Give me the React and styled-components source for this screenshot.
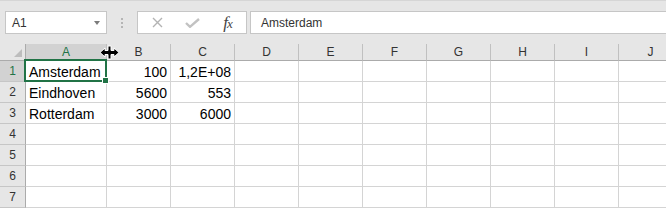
import { Fragment } from "react";
import styled, { createGlobalStyle } from "styled-components";

const GlobalStyle = createGlobalStyle`
  html, body {
    margin: 0;
    padding: 0;
    background: #ffffff;
    overflow: hidden;
  }
`;

const StyledWindow = styled.div`
  position: relative;
  width: 666px;
  height: 208px;
  overflow: hidden;
  background: #ffffff;
  font-family: "Liberation Sans", Arial, sans-serif;
`;

const StyledToolbar = styled.div`
  display: flex;
  align-items: flex-start;
  box-sizing: border-box;
  height: 44px;
  padding: 10px 0 0 5px;
  background: #e6e6e6;
  border-top: 1px solid #d6d6d6;
`;

const StyledNameBox = styled.div`
  display: flex;
  align-items: center;
  justify-content: space-between;
  box-sizing: border-box;
  width: 102px;
  height: 23px;
  padding: 0 6px 0 6px;
  background: #ffffff;
  border: 1px solid #c6c6c6;
  font-size: 12px;
  color: #333333;
`;

const StyledCaret = styled.span`
  width: 0;
  height: 0;
  margin-top: 1px;
  border-style: solid;
  border-width: 4px 3.5px 0 3.5px;
  border-color: #7b7b7b transparent transparent transparent;
`;

const StyledGrip = styled.div`
  display: flex;
  flex-direction: column;
  align-items: center;
  justify-content: center;
  gap: 2px;
  width: 30px;
  height: 23px;
`;

const StyledGripDot = styled.span`
  width: 2px;
  height: 2px;
  background: #b5b5b5;
`;

const StyledFxBox = styled.div`
  display: flex;
  align-items: center;
  box-sizing: border-box;
  width: 110px;
  height: 23px;
  padding-left: 2px;
  background: #ffffff;
  border: 1px solid #c6c6c6;
`;

const StyledFxButton = styled.div`
  display: flex;
  align-items: center;
  justify-content: center;
  width: 35px;
  height: 21px;
`;

const StyledFxLabel = styled.span`
  font-family: "Liberation Serif", "Times New Roman", serif;
  font-style: italic;
  font-size: 17px;
  line-height: 17px;
  color: #444444;
  letter-spacing: -1px;

  small {
    font-size: 13px;
  }
`;

const StyledFormulaInput = styled.div`
  flex: 1;
  display: flex;
  align-items: center;
  box-sizing: border-box;
  height: 23px;
  margin-left: 3px;
  padding-left: 10px;
  background: #ffffff;
  border: 1px solid #c6c6c6;
  border-right: none;
  font-size: 12px;
  color: #333333;
`;

const StyledSheet = styled.div`
  display: grid;
  grid-template-columns: 26px 81px repeat(9, 64px);
  grid-template-rows: 17px repeat(7, 21px);
`;

const StyledCorner = styled.div`
  position: relative;
  box-sizing: border-box;
  background: #e6e6e6;
  border-right: 1px solid #ababab;
  border-bottom: 1px solid #ababab;

  &::after {
    content: "";
    position: absolute;
    right: 3px;
    bottom: 3px;
    width: 0;
    height: 0;
    border-style: solid;
    border-width: 0 0 8px 8px;
    border-color: transparent transparent #bdbdbd transparent;
  }
`;

const StyledColHeader = styled.div`
  box-sizing: border-box;
  padding-top: 1px;
  background: ${(p) => (p.$active ? "#d2d2d2" : "#e6e6e6")};
  border-right: 1px solid #c0c0c0;
  border-bottom: 1px solid #ababab;
  text-align: center;
  font-size: 12px;
  line-height: 15px;
  color: ${(p) => (p.$active ? "#217346" : "#333333")};
`;

const StyledRowHeader = styled.div`
  box-sizing: border-box;
  padding-top: 1px;
  background: ${(p) => (p.$active ? "#d2d2d2" : "#e6e6e6")};
  border-right: 1px solid #ababab;
  border-bottom: 1px solid #c6c6c6;
  text-align: center;
  font-size: 12px;
  line-height: 19px;
  color: ${(p) => (p.$active ? "#217346" : "#333333")};
`;

const StyledCell = styled.div`
  position: relative;
  box-sizing: border-box;
  padding: 2px 3px 0 3px;
  border-right: 1px solid #d4d4d4;
  border-bottom: 1px solid #d4d4d4;
  text-align: ${(p) => (p.$number ? "right" : "left")};
  font-size: 14px;
  line-height: 19px;
  color: #000000;
  white-space: nowrap;
`;

const StyledSelection = styled.div`
  position: absolute;
  top: -2px;
  left: -2px;
  right: -1px;
  bottom: -1px;
  border: 2px solid #217346;
  pointer-events: none;
  z-index: 2;

  &::after {
    content: "";
    position: absolute;
    right: -4px;
    bottom: -4px;
    width: 5px;
    height: 5px;
    background: #217346;
    border: 1px solid #ffffff;
  }
`;

const StyledCursor = styled.svg`
  position: absolute;
  left: 99px;
  top: 45px;
  z-index: 5;
`;

const columns = ["A", "B", "C", "D", "E", "F", "G", "H", "I", "J"];

const rows = [
  ["Amsterdam", "100", "1,2E+08"],
  ["Eindhoven", "5600", "553"],
  ["Rotterdam", "3000", "6000"],
  [],
  [],
  [],
  [],
];

function CancelIcon() {
  return (
    <svg width="11" height="11" viewBox="0 0 11 11">
      <path d="M1 1 L10 10 M10 1 L1 10" stroke="#b3b3b3" strokeWidth="1.4" fill="none" />
    </svg>
  );
}

function EnterIcon() {
  return (
    <svg width="15" height="10" viewBox="0 0 15 10">
      <path d="M1 5 L5 8.8 L14 1" stroke="#c2c2c2" strokeWidth="2.4" fill="none" />
    </svg>
  );
}

function ResizeCursor() {
  return (
    <StyledCursor width="21" height="15" viewBox="0 0 21 15">
      <path
        d="M9 1 H12 V5.5 H15 V3 L20 7.5 L15 12 V9.5 H12 V14 H9 V9.5 H6 V12 L1 7.5 L6 3 V5.5 H9 Z"
        fill="#000000"
        stroke="#ffffff"
        strokeWidth="1"
      />
    </StyledCursor>
  );
}

export default function App() {
  return (
    <>
      <GlobalStyle />
      <StyledWindow>
        <StyledToolbar>
          <StyledNameBox>
            A1
            <StyledCaret />
          </StyledNameBox>
          <StyledGrip>
            <StyledGripDot />
            <StyledGripDot />
            <StyledGripDot />
          </StyledGrip>
          <StyledFxBox>
            <StyledFxButton>
              <CancelIcon />
            </StyledFxButton>
            <StyledFxButton>
              <EnterIcon />
            </StyledFxButton>
            <StyledFxButton>
              <StyledFxLabel>
                f<small>x</small>
              </StyledFxLabel>
            </StyledFxButton>
          </StyledFxBox>
          <StyledFormulaInput>Amsterdam</StyledFormulaInput>
        </StyledToolbar>

        <StyledSheet>
          <StyledCorner />
          {columns.map((c) => (
            <StyledColHeader key={c} $active={c === "A"}>
              {c}
            </StyledColHeader>
          ))}
          {rows.map((row, r) => (
            <Fragment key={r}>
              <StyledRowHeader $active={r === 0}>{r + 1}</StyledRowHeader>
              {columns.map((c, ci) => (
                <StyledCell key={c} $number={ci > 0}>
                  {row[ci]}
                  {r === 0 && ci === 0 && <StyledSelection />}
                </StyledCell>
              ))}
            </Fragment>
          ))}
        </StyledSheet>

        <ResizeCursor />
      </StyledWindow>
    </>
  );
}
